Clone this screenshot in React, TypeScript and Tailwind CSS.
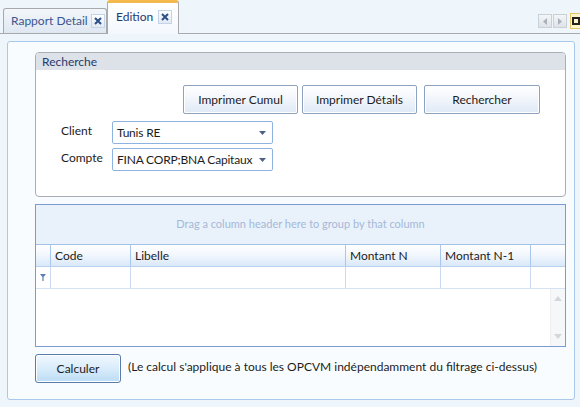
import React from 'react';

const font = { fontFamily: 'Lato, "Noto Sans", sans-serif' };

const CloseBox: React.FC<{ ml: string }> = ({ ml }) => (
  <span className={`${ml} flex h-[14px] w-[14px] flex-none items-center justify-center border border-[#c5d3e6] bg-gradient-to-b from-[#fdfeff] to-[#e1e9f4]`}>
    <svg width="8" height="8" viewBox="0 0 8 8">
      <path d="M1 1L7 7M7 1L1 7" stroke="#2d4f86" strokeWidth="2" />
    </svg>
  </span>
);

const Combo: React.FC<{ value: string }> = ({ value }) => (
  <div className="flex h-[23px] w-[161px] items-center justify-between gap-[4px] overflow-hidden whitespace-nowrap rounded-[2px] border border-[#8fb3e0] bg-white pl-[4px] pr-[6px] text-[12px] text-[#1c1c1c]">
    <span className="tracking-[-0.2px]">{value}</span>
    <svg width="7" height="4" viewBox="0 0 7 4" className="flex-none">
      <path d="M0 0H7L3.5 4Z" fill="#4d6185" />
    </svg>
  </div>
);

const Btn: React.FC<{ label: string; cls?: string }> = ({ label, cls = '' }) => (
  <button
    className={`flex h-[29px] w-[115px] items-center justify-center rounded-[2px] border border-[#8ca2bf] bg-gradient-to-b from-[#ffffff] via-[#f1f5fb] to-[#dfe9f6] text-[12px] text-[#1c1c1c] shadow-[inset_0_0_0_1px_#ffffff] ${cls}`}
  >
    {label}
  </button>
);

export default function App() {
  return (
    <div
      className="h-[407px] w-[580px] overflow-hidden bg-[#eef6fb] text-[12px]"
      style={font}
    >
      {/* tab strip */}
      <div className="flex h-[34px] items-end border-b border-[#a7a9ac] pl-[3px]">
        <div className="flex h-[25px] w-[104px] items-center whitespace-nowrap rounded-t-[3px] border border-b-0 border-[#a7a9ac] bg-gradient-to-b from-[#f3f7fb] to-[#dfe7f1] pl-[7px] text-[12px] text-[#3a5690]">
          Rapport Detail
          <CloseBox ml="ml-[3px]" />
        </div>
        <div className="-mb-px flex h-[34px] w-[72px] items-center rounded-t-[3px] border border-b-0 border-t-[3px] border-[#a7a9ac] border-t-[#f4b94c] bg-gradient-to-b from-[#ffffff] to-[#f3f8fe] pl-[8px] pb-[3px] text-[12px] text-[#1f3a6e]">
          Edition
          <CloseBox ml="ml-[5px]" />
        </div>
        <div className="flex-1" />
        <div className="mb-[4px] flex items-center gap-[1px]">
          <span className="flex h-[14px] w-[14px] items-center justify-center border border-[#c9d0d8] bg-gradient-to-b from-[#f4f6f8] to-[#dfe3e8]">
            <svg width="4" height="7" viewBox="0 0 4 7"><path d="M4 0V7L0 3.5Z" fill="#a9b1bb" /></svg>
          </span>
          <span className="flex h-[14px] w-[14px] items-center justify-center border border-[#c9d0d8] bg-gradient-to-b from-[#f4f6f8] to-[#dfe3e8]">
            <svg width="4" height="7" viewBox="0 0 4 7"><path d="M0 0V7L4 3.5Z" fill="#a9b1bb" /></svg>
          </span>
          <span className="ml-[2px] flex h-[16px] w-[10px] items-center border border-r-0 border-[#e3c467] bg-[#fff4c8] pl-[1px]">
            <span className="h-[8px] w-[8px] border-2 border-[#222]" />
          </span>
        </div>
      </div>

      {/* main panel */}
      <div className="mx-[7px] mt-[7px] h-[359px] w-[568px] rounded-[3px] border border-[#a8c8ec] bg-[#f9fcfe] px-[27px] pt-[10px]">
        {/* Recherche group */}
        <div className="h-[145px] w-[531px] overflow-hidden rounded-[4px] border border-[#a9aeb6] bg-white">
          <div className="flex h-[17px] items-center bg-[#dde1e8] pl-[6px] text-[12px] text-[#1f3a6e]">
            Recherche
          </div>
          <div className="flex gap-[4px] pl-[147px] pt-[15px]">
            <Btn label="Imprimer Cumul" />
            <Btn label="Imprimer Détails" />
            <Btn label="Rechercher" cls="ml-[3px] w-[116px]" />
          </div>
          <div className="mt-[7px] grid grid-cols-[51px_auto] items-center gap-y-[4px] pl-[25px]">
            <span className="-mt-[3px] text-[12px] text-[#1c1c1c]">Client</span>
            <Combo value="Tunis RE" />
            <span className="-mt-[3px] text-[12px] text-[#1c1c1c]">Compte</span>
            <Combo value="FINA CORP;BNA Capitaux" />
          </div>
        </div>

        {/* grid */}
        <div className="mt-[7px] flex h-[143px] w-[531px] flex-col border border-[#7a9cd2] bg-white">
          <div className="flex h-[40px] items-center justify-center border-b border-[#a3c0e6] bg-[#e9f2fb] text-[11px] text-[#a5b8d7]">
            Drag a column header here to group by that column
          </div>
          <div className="flex h-[22px] border-b border-[#b9d1ef] bg-gradient-to-b from-[#ffffff] via-[#f1f6fd] to-[#d9e8f9] text-[12px] text-[#1c1c1c]">
            <div className="w-[15px] border-r border-[#a9c6ec]" />
            <div className="flex w-[80px] items-center border-r border-[#a9c6ec] pl-[4px]">Code</div>
            <div className="flex w-[215px] items-center border-r border-[#a9c6ec] pl-[4px]">Libelle</div>
            <div className="flex w-[95px] items-center border-r border-[#a9c6ec] pl-[4px]">Montant N</div>
            <div className="flex w-[90px] items-center border-r border-[#a9c6ec] pl-[4px]">Montant N-1</div>
            <div className="flex-1" />
          </div>
          <div className="flex h-[22px] border-b border-[#d4e2f4] bg-white">
            <div className="flex w-[15px] items-center justify-center border-r border-[#c9daf1]">
              <svg width="6" height="7" viewBox="0 0 6 7"><path d="M0 0H6L3.6 3V7H2.4V3Z" fill="#5b7fb6" /></svg>
            </div>
            <div className="w-[80px] border-r border-[#c9daf1]" />
            <div className="w-[215px] border-r border-[#c9daf1]" />
            <div className="w-[95px] border-r border-[#c9daf1]" />
            <div className="w-[90px] border-r border-[#c9daf1]" />
            <div className="flex-1" />
          </div>
          <div className="flex flex-1 justify-end">
            <div className="flex w-[15px] flex-col items-center justify-between border-l border-[#eceef1] bg-[#f6f7f8] py-[7px]">
              <svg width="8" height="5" viewBox="0 0 8 5"><path d="M0 5H8L4 0Z" fill="#d3d6da" /></svg>
              <svg width="8" height="5" viewBox="0 0 8 5"><path d="M0 0H8L4 5Z" fill="#d3d6da" /></svg>
            </div>
          </div>
        </div>

        {/* calc */}
        <div className="mt-[7px] flex items-center gap-[7px]">
          <button className="flex h-[29px] w-[86px] items-center justify-center rounded-[3px] border border-[#5a7ca8] bg-gradient-to-b from-[#f1f8fe] via-[#d9ecfb] to-[#bcdcf5] text-[12px] text-[#1c1c1c] shadow-[inset_0_0_0_1px_#ffffff]">
            Calculer
          </button>
          <span className="-mt-[3px] whitespace-nowrap text-[12px] text-[#1c1c1c]">
            (Le calcul s'applique à tous les OPCVM indépendamment du filtrage ci-dessus)
          </span>
        </div>
      </div>
    </div>
  );
}
